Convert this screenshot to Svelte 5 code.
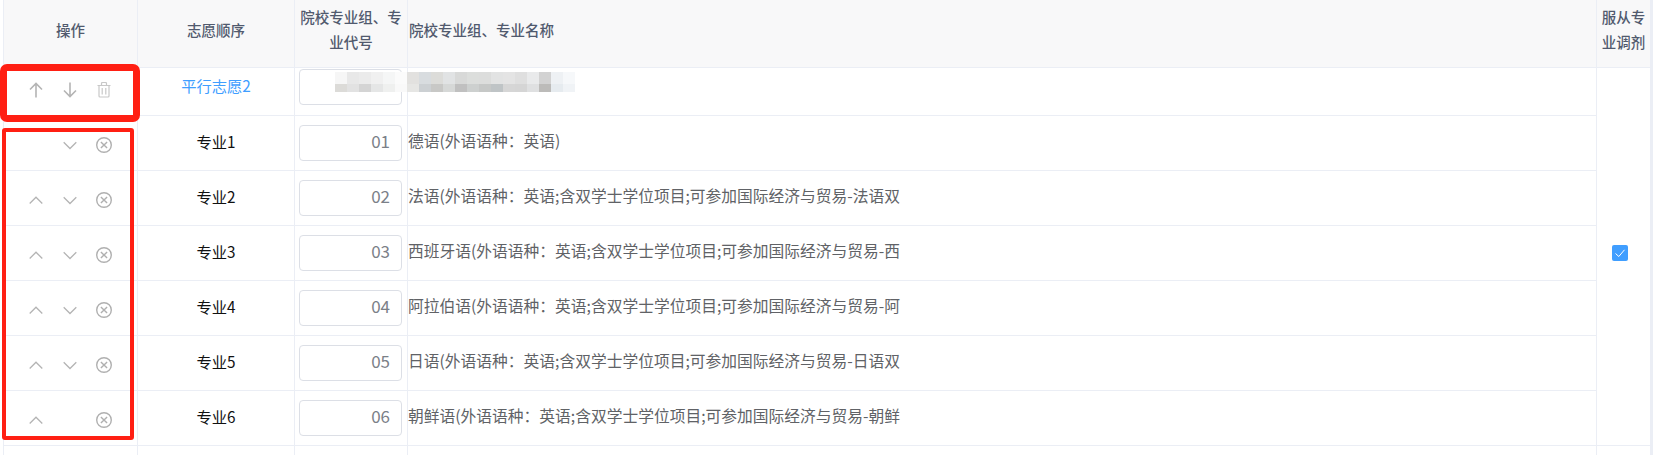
<script>
  const cols = [134, 157, 113, 1189, 55]
  const lang = "外语语种\uFF1A英语"

  const majors = [
    { seq: "专业1", code: "01", name: `德语(${lang})`, up: false, down: true },
    { seq: "专业2", code: "02", name: `法语(${lang};含双学士学位项目;可参加国际经济与贸易-法语双`, up: true, down: true },
    { seq: "专业3", code: "03", name: `西班牙语(${lang};含双学士学位项目;可参加国际经济与贸易-西`, up: true, down: true },
    { seq: "专业4", code: "04", name: `阿拉伯语(${lang};含双学士学位项目;可参加国际经济与贸易-阿`, up: true, down: true },
    { seq: "专业5", code: "05", name: `日语(${lang};含双学士学位项目;可参加国际经济与贸易-日语双`, up: true, down: true },
    { seq: "专业6", code: "06", name: `朝鲜语(${lang};含双学士学位项目;可参加国际经济与贸易-朝鲜`, up: true, down: false },
  ]

  // mosaic over the redacted school name
  const mosaic = [
    ["#f6f6f6", "#e8e8e8", "#ebebeb", "#f0f0f0", "#f5f6f6", "#fbfbfb", "#e2e1df", "#d8dcdf", "#dcdcd9", "#e1e3e4", "#d8d9d8", "#dcdedc", "#dcdddc", "#e2e3e3", "#e4e4e4", "#dfdfdf", "#e9eaeb", "#d2d2d2", "#eef1f4", "#f6f8fa"],
    ["#dcdbd8", "#e2e2e2", "#d4d4d4", "#e5e6e6", "#eff0ef", "#f9f9f9", "#e6e6e4", "#ccd0d3", "#c8c8c6", "#d6d8d7", "#c0c0c0", "#cdd0cf", "#c6c8c7", "#bfc4c6", "#d6d6d6", "#d5d5d5", "#dfe0e1", "#bcbbb9", "#e6ebef", "#f0f3f6"],
  ]
</script>

<div class="page">
  <table>
    <colgroup>
      {#each cols as w}
        <col style="width: {w}px" />
      {/each}
    </colgroup>
    <thead>
      <tr>
        <th>操作</th>
        <th>志愿顺序</th>
        <th>院校专业组、专业代号</th>
        <th class="left">院校专业组、专业名称</th>
        <th>服从专业调剂</th>
      </tr>
    </thead>
    <tbody>
      <tr class="group">
        <td>
          <div class="ops group-ops">
            <svg viewBox="0 0 16 16"><path d="M8 15.500V1.500M2 7.500 8 1.500 14 7.500" /></svg>
            <svg viewBox="0 0 16 16"><path d="M8 .5v14M2 8.500 8 14.500 14 8.500" /></svg>
            <svg class="trash" viewBox="0 0 16 16"><path d="M1.500 3.500h13M5.500 3.500V1.500a1 1 0 0 1 1-1h3a1 1 0 0 1 1 1v2M3 3.500V14a1 1 0 0 0 1 1h8a1 1 0 0 0 1-1V3.500M6.200 6v6.500M9.800 6v6.500" /></svg>
          </div>
        </td>
        <td class="link">平行志愿2</td>
        <td class="code"><div class="input"></div></td>
        <td class="name"></td>
        <td class="check" rowspan="7">
          <span class="box">
            <svg viewBox="0 0 16 16"><path d="M3.500 8.500 6.800 11.500 12.500 4.800" /></svg>
          </span>
        </td>
      </tr>
      {#each majors as m}
        <tr>
          <td>
            <div class="ops">
              <span class="slot">
                {#if m.up}
                  <svg viewBox="0 0 16 16"><path d="M1.700 11.500 8 5.200 14.300 11.500" /></svg>
                {/if}
              </span>
              <span class="slot">
                {#if m.down}
                  <svg viewBox="0 0 16 16"><path d="M1.700 5.200 8 11.500 14.300 5.200" /></svg>
                {/if}
              </span>
              <svg class="remove" viewBox="0 0 16 16"><circle cx="8" cy="8" r="7.300" /><path d="M4.900 4.900 11.100 11.100M11.100 4.900 4.900 11.100" /></svg>
            </div>
          </td>
          <td class="seq">{m.seq}</td>
          <td class="code"><div class="input">{m.code}</div></td>
          <td class="name">{m.name}</td>
        </tr>
      {/each}
      <tr class="rest">
        <td></td>
        <td></td>
        <td></td>
        <td></td>
        <td></td>
      </tr>
    </tbody>
  </table>

  <div class="mosaic">
    {#each mosaic as line}
      {#each line as c}
        <i style="background: {c}"></i>
      {/each}
    {/each}
  </div>
  <div class="mark mark-a"></div>
  <div class="mark mark-b"></div>
</div>

<style>
  :global(body) { background: #fff; }

  .page {
    position: relative;
    width: 1660px;
    height: 455px;
    overflow: hidden;
    font-family: "Microsoft YaHei", "Noto Sans CJK SC", "Liberation Sans", sans-serif;
    font-size: 15.300px;
    color: #606266;
  }

  table {
    table-layout: fixed;
    width: 1648px;
    margin-left: 3px;
    border-collapse: collapse;
    border-left: 1px solid #ebeef5;
    border-right: 3px solid #ebeef5;
  }

  th {
    box-sizing: border-box;
    height: 67px;
    padding: 0 1px 8px;
    background: #f8f8f9;
    border: 1px solid #ebeef5;
    border-top: none;
    font-size: 14.500px;
    font-weight: 500;
    line-height: 25px;
    color: #515a6e;
    text-align: center;
  }

  th.left { text-align: left; }

  td {
    box-sizing: border-box;
    height: 55px;
    padding: 0;
    border: 1px solid #ebeef5;
    text-align: center;
    background: #fff;
  }

  .group td { height: 48px; }
  .group .link { color: #409eff; padding-bottom: 12px; }
  .seq { color: #111; padding-bottom: 4px; }
  .rest td { height: 20px; }

  .ops {
    display: grid;
    grid-template-columns: repeat(3, 16px);
    column-gap: 18px;
    justify-content: center;
    align-items: center;
    margin-left: -2px;
    padding-top: 5px;
  }

  .group-ops { padding: 0 0 3px; }
  .slot { display: block; height: 16px; }

  .ops svg {
    display: block;
    width: 16px;
    height: 16px;
    fill: none;
    stroke: #b4b4b4;
    stroke-width: 1.300;
  }

  .group-ops svg { stroke-width: 1.600; }
  .group-ops svg.trash { stroke: #c8c8c8; stroke-width: 1.200; }
  .ops svg.remove { stroke: #b0b0b0; stroke-width: 1.400; }

  .code { padding: 0 4px; }
  .group .code { vertical-align: top; padding-top: 1px; }

  .input {
    box-sizing: border-box;
    width: 103px;
    height: 36px;
    padding-right: 11px;
    border: 1px solid #dcdfe6;
    border-radius: 4px;
    background: #fff;
    font-size: 17px;
    line-height: 30px;
    text-align: right;
    color: #7b8088;
  }

  .name {
    text-align: left;
    padding-bottom: 4px;
    font-size: 15.750px;
    white-space: nowrap;
  }

  .check { vertical-align: middle; padding: 0 7px 12px 0; }

  .box {
    display: inline-block;
    vertical-align: middle;
    width: 16px;
    height: 16px;
    border-radius: 2px;
    background: #409eff;
  }

  .box svg {
    display: block;
    width: 16px;
    height: 16px;
    fill: none;
    stroke: #fff;
    stroke-width: 1;
  }

  .mosaic {
    position: absolute;
    left: 335px;
    top: 72px;
    display: grid;
    grid-template-columns: repeat(20, 12px);
    grid-template-rows: 12px 8px;
  }

  .mark {
    position: absolute;
    box-sizing: border-box;
    border-style: solid;
    border-color: #ff1f13;
  }

  .mark-a {
    left: 0;
    top: 64px;
    width: 140px;
    height: 58px;
    border-width: 7px;
    border-radius: 7px;
  }

  .mark-b {
    left: 2px;
    top: 128px;
    width: 132px;
    height: 312px;
    border-width: 4px;
    border-radius: 3px;
  }
</style>
